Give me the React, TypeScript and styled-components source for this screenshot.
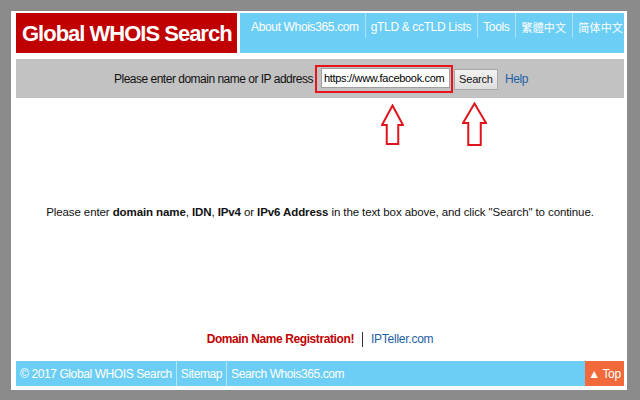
import React from "react";
import styled, { createGlobalStyle } from "styled-components";

const Global = createGlobalStyle`
  html, body { margin: 0; padding: 0; }
  body {
    background: #8b8b8b;
    font-family: "Liberation Sans", Arial, sans-serif;
    width: 640px;
    height: 400px;
    overflow: hidden;
  }
`;

const Page = styled.div`
  padding: 11px 13px 10px 11px;
`;

const Panel = styled.div`
  background: #ffffff;
  padding: 2px 3px 4px 5px;
  height: 373px;
  display: flex;
  flex-direction: column;
  & > * { flex-shrink: 0; }
`;

const Header = styled.header`
  display: flex;
  gap: 3px;
  height: 40px;
`;

const Logo = styled.div`
  flex: 0 0 221px;
  background: #c00000;
  color: #fff;
  font-weight: bold;
  font-size: 22px;
  letter-spacing: -1px;
  white-space: nowrap;
  display: flex;
  align-items: center;
  padding-left: 6px;
  box-sizing: border-box;
  padding-top: 1px;
`;

const Nav = styled.nav`
  flex: 1;
  min-width: 0;
  overflow: hidden;
  background: #6dcef5;
  display: flex;
  align-items: flex-start;
  padding-left: 5px;
`;

const NavItem = styled.a<{ $first?: boolean; $cjk?: boolean }>`
  color: #fff;
  text-decoration: none;
  white-space: nowrap;
  font-size: ${(p) => (p.$cjk ? "11px" : "12px")};
  letter-spacing: ${(p) => (p.$cjk ? "0.2px" : "-0.35px")};
  font-family: ${(p) =>
    p.$cjk
      ? '"Noto Sans CJK TC", "Noto Sans CJK SC", sans-serif'
      : '"Liberation Sans", Arial, sans-serif'};
  height: 25px;
  box-sizing: border-box;
  display: flex;
  align-items: center;
  padding: 3px 6px 0 ${(p) => (p.$first ? "6px" : "5px")};
  border-left: ${(p) => (p.$first ? "none" : "1px solid #a9e2f9")};
`;

const SearchBar = styled.div`
  margin-top: 6px;
  height: 39px;
  background: #c2c2c2;
  display: flex;
  align-items: center;
  justify-content: center;
  font-size: 12px;
  letter-spacing: -0.5px;
  white-space: nowrap;
  color: #111;
`;

const Prompt = styled.span`
  margin-right: 2px;
  margin-left: 2px;
`;

const Highlight = styled.span`
  border: 2px solid #e8141c;
  padding: 1px 1px 3px 4px;
  display: inline-flex;
`;

const Input = styled.input`
  width: 129px;
  height: 20px;
  box-sizing: border-box;
  border: 1px solid #a0a0a0;
  font-family: "Liberation Sans", Arial, sans-serif;
  font-size: 11px;
  letter-spacing: -0.3px;
  padding: 0 2px;
  color: #000;
  outline: none;
`;

const Button = styled.button`
  margin-left: 1px;
  width: 44px;
  height: 21px;
  box-sizing: border-box;
  border: 1px solid #a9a9a9;
  background: linear-gradient(#f2f2f2, #dedede);
  font-family: "Liberation Sans", Arial, sans-serif;
  font-size: 11px;
  letter-spacing: -0.2px;
  color: #111;
  padding: 0;
  margin-top: 1px;
`;

const Help = styled.a`
  margin-left: 7px;
  color: #1f5ea8;
  font-size: 12px;
  letter-spacing: -0.4px;
  text-decoration: none;
`;

const Main = styled.main`
  position: relative;
  flex: 1;
  display: flex;
  flex-direction: column;
  align-items: center;
`;

const Arrow = styled.svg<{ $left: number; $top: number }>`
  position: absolute;
  left: ${(p) => p.$left}px;
  top: ${(p) => p.$top}px;
`;

const Message = styled.p`
  margin: 105px 0 0;
  font-size: 11.5px;
  letter-spacing: -0.1px;
  line-height: 18px;
  white-space: nowrap;
  color: #111;
  b { font-weight: bold; }
`;

const Links = styled.div`
  margin-top: 109px;
  display: flex;
  align-items: center;
  font-size: 12px;
  line-height: 18px;
  white-space: nowrap;
`;

const RedLink = styled.a`
  color: #c00000;
  font-weight: bold;
  letter-spacing: -0.4px;
  text-decoration: none;
`;

const Sep = styled.span`
  width: 1px;
  height: 15px;
  background: #333;
  margin: 0 8px;
`;

const BlueLink = styled.a`
  color: #2160a5;
  letter-spacing: -0.25px;
  text-decoration: none;
`;

const Footer = styled.footer`
  height: 25px;
  background: #6dcef5;
  display: flex;
  align-items: stretch;
  font-size: 12px;
  letter-spacing: -0.4px;
  white-space: nowrap;
  color: #fff;
`;

const FootItem = styled.span<{ $first?: boolean }>`
  display: flex;
  align-items: center;
  padding: 0 4px;
  border-left: ${(p) => (p.$first ? "none" : "1px solid #b5e6fa")};
`;

const Spacer = styled.span`
  flex: 1;
`;

const TopButton = styled.span`
  width: 39px;
  background: #f26a3b;
  display: flex;
  align-items: center;
  justify-content: center;
  gap: 3px;
  font-size: 12px;
`;

const ArrowIcon = ({ left, top, w, h }: { left: number; top: number; w: number; h: number }) => {
  const cx = w / 2;
  const hb = 21;
  const sw = w * 0.25;
  return (
    <Arrow $left={left} $top={top} width={w} height={h} viewBox={`0 0 ${w} ${h}`}>
      <polygon
        points={`${cx},1.5 ${w - 1},${hb} ${cx + sw},${hb} ${cx + sw},${h - 1} ${cx - sw},${h - 1} ${cx - sw},${hb} 1,${hb}`}
        fill="#fff"
        stroke="#e0141c"
        strokeWidth="2"
        strokeLinejoin="miter"
      />
    </Arrow>
  );
};

export default function App() {
  return (
    <>
      <Global />
      <Page>
        <Panel>
          <Header>
            <Logo>Global WHOIS Search</Logo>
            <Nav>
              <NavItem $first>About Whois365.com</NavItem>
              <NavItem>gTLD &amp; ccTLD Lists</NavItem>
              <NavItem>Tools</NavItem>
              <NavItem $cjk>繁體中文</NavItem>
              <NavItem $cjk>简体中文</NavItem>
            </Nav>
          </Header>
          <SearchBar>
            <Prompt>Please enter domain name or IP address</Prompt>
            <Highlight>
              <Input defaultValue="https://www.facebook.com" />
            </Highlight>
            <Button>Search</Button>
            <Help>Help</Help>
          </SearchBar>
          <Main>
            <ArrowIcon left={365} top={6} w={23} h={41} />
            <ArrowIcon left={446} top={4} w={25} h={44} />
            <Message>
              Please enter <b>domain name</b>, <b>IDN</b>, <b>IPv4</b> or <b>IPv6 Address</b> in the text box above, and click "Search" to continue.
            </Message>
            <Links>
              <RedLink>Domain Name Registration!</RedLink>
              <Sep />
              <BlueLink>IPTeller.com</BlueLink>
            </Links>
          </Main>
          <Footer>
            <FootItem $first>© 2017 Global WHOIS Search</FootItem>
            <FootItem>Sitemap</FootItem>
            <FootItem>Search Whois365.com</FootItem>
            <Spacer />
            <TopButton>▲ Top</TopButton>
          </Footer>
        </Panel>
      </Page>
    </>
  );
}
